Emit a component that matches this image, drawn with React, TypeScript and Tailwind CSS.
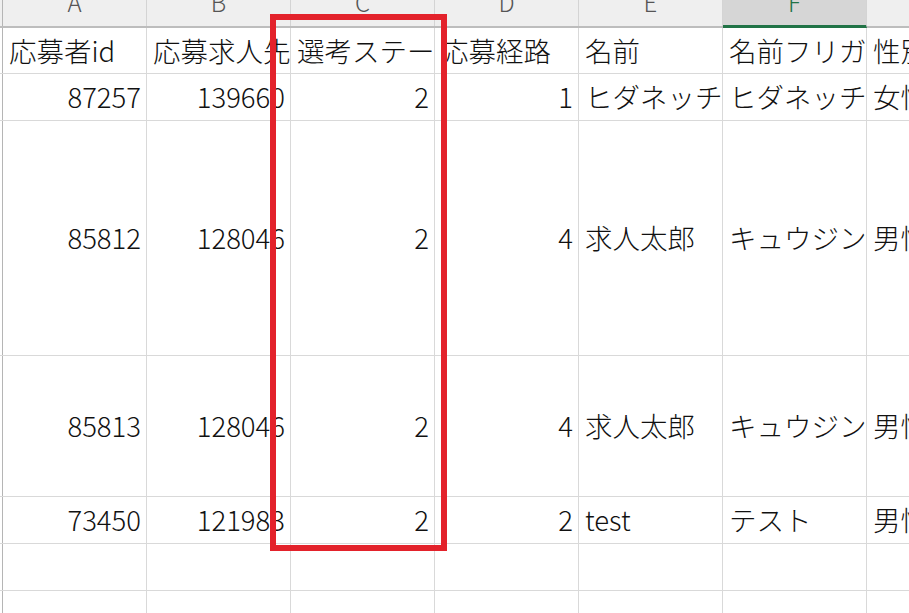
const COLS = ['A', 'B', 'C', 'D', 'E', 'F', 'G'];

type Val = { t: string; num?: boolean };

const ROWS: { h: string; cells: Val[] }[] = [
    {
        h: 'h-[46px]',
        cells: [
            { t: '応募者id' },
            { t: '応募求人先' },
            { t: '選考ステータス' },
            { t: '応募経路' },
            { t: '名前' },
            { t: '名前フリガナ' },
            { t: '性別' },
        ],
    },
    {
        h: 'h-[47px]',
        cells: [
            { t: '87257', num: true },
            { t: '139660', num: true },
            { t: '2', num: true },
            { t: '1', num: true },
            { t: 'ヒダネッチャン' },
            { t: 'ヒダネッチャン' },
            { t: '女性' },
        ],
    },
    {
        h: 'h-[235px]',
        cells: [
            { t: '85812', num: true },
            { t: '128046', num: true },
            { t: '2', num: true },
            { t: '4', num: true },
            { t: '求人太郎' },
            { t: 'キュウジンタロウ' },
            { t: '男性' },
        ],
    },
    {
        h: 'h-[141px]',
        cells: [
            { t: '85813', num: true },
            { t: '128046', num: true },
            { t: '2', num: true },
            { t: '4', num: true },
            { t: '求人太郎' },
            { t: 'キュウジンタロウ' },
            { t: '男性' },
        ],
    },
    {
        h: 'h-[47px]',
        cells: [
            { t: '73450', num: true },
            { t: '121983', num: true },
            { t: '2', num: true },
            { t: '2', num: true },
            { t: 'test' },
            { t: 'テスト' },
            { t: '男性' },
        ],
    },
    { h: 'h-[47px]', cells: COLS.map(() => ({ t: '' })) },
    { h: 'h-[47px]', cells: COLS.map(() => ({ t: '' })) },
];

export default function App() {
    return (
        <div
            className="relative w-[909px] h-[613px] overflow-hidden bg-white text-[#111] text-[27.5px] font-light"
            style={{ fontFamily: '"Noto Sans CJK JP", "Noto Sans", sans-serif' }}
        >
            {/* column letters */}
            <div className="flex h-[28px] bg-[#efefef] border-b-2 border-[#bdbdbd]">
                <div className="w-[3px] shrink-0 border-r border-[#b5b5b5]" />
                {COLS.map((c) => (
                    <div
                        key={c}
                        className={
                            'w-[144px] shrink-0 flex justify-center overflow-hidden border-r border-[#d4d4d4] ' +
                            (c === 'F' ? 'bg-[#d6d6d6] border-b-[3px] border-b-[#217346] -mb-[2px] text-[#217346]' : 'text-[#555]')
                        }
                    >
                        <span className="text-[24px] leading-none -mt-[10px]">{c}</span>
                    </div>
                ))}
            </div>

            {ROWS.map((row, i) => (
                <div key={i} className={'flex border-b border-[#d9d9d9] ' + row.h}>
                    <div className="w-[3px] shrink-0 border-r border-[#b5b5b5]" />
                    {row.cells.map((cell, j) => (
                        <div
                            key={j}
                            className={
                                'w-[144px] shrink-0 flex items-center overflow-hidden whitespace-nowrap border-r border-[#d9d9d9] ' +
                                (cell.num ? 'justify-end pr-[5px]' : 'justify-start pl-[6px]')
                            }
                        >
                            <span className="leading-none">{cell.t}</span>
                        </div>
                    ))}
                </div>
            ))}

            {/* highlight box */}
            <div className="absolute left-[270px] top-[14px] w-[177px] h-[537px] border-[6px] border-[#e3222b]" />
        </div>
    );
}
